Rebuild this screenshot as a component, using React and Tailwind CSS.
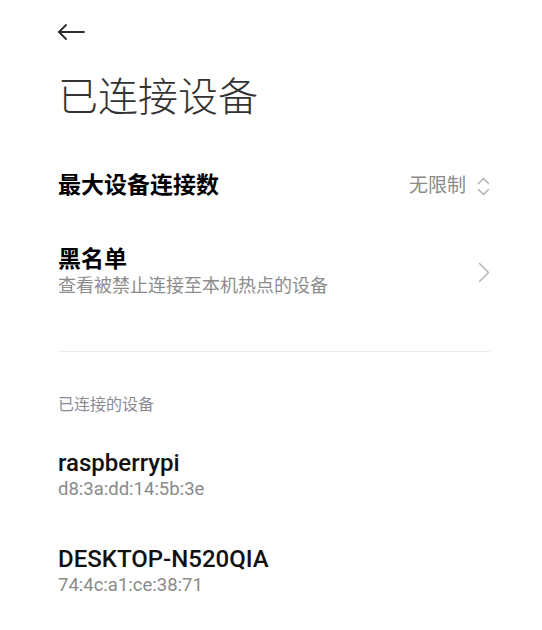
import React from 'react';

const font = { fontFamily: '"Roboto", "Noto Sans CJK SC", sans-serif' };

const devices = [
  { name: 'raspberrypi', mac: 'd8:3a:dd:14:5b:3e' },
  { name: 'DESKTOP-N520QIA', mac: '74:4c:a1:ce:38:71' },
];

const BackArrow = () => (
  <svg width="28" height="18" viewBox="0 0 28 18" fill="none" stroke="#2b2b2b" strokeWidth="1.8" strokeLinecap="round" strokeLinejoin="round">
    <path d="M2 9h25" />
    <path d="M9 2L2 9l7 7" />
  </svg>
);

const UpDown = () => (
  <svg width="13" height="19" viewBox="0 0 13 19" fill="none" stroke="#ababab" strokeWidth="1.4" strokeLinecap="round" strokeLinejoin="round">
    <path d="M1.5 6.5L6.5 1.5l5 5" />
    <path d="M1.5 12.5l5 5 5-5" />
  </svg>
);

const ChevronRight = () => (
  <svg width="12" height="21" viewBox="0 0 12 21" fill="none" stroke="#b0b0b0" strokeWidth="1.4" strokeLinecap="round" strokeLinejoin="round">
    <path d="M1.5 1.5l9 9-9 9" />
  </svg>
);

export default function App() {
  return (
    <div className="w-[542px] h-[630px] bg-white overflow-hidden pl-[58px] pr-[52px]" style={font}>
      <div className="h-16 flex items-center -ml-[1px]">
        <BackArrow />
      </div>

      <h1 className="mt-[10px] text-[40px] leading-[48px] font-light text-[#333333]">已连接设备</h1>

      <div className="mt-[48px] flex items-center justify-between">
        <div className="text-[23px] leading-[32px] font-bold text-black">最大设备连接数</div>
        <div className="flex items-center gap-[11px]">
          <span className="text-[19px] leading-[32px] text-[#8a8a8a]">无限制</span>
          <UpDown />
        </div>
      </div>

      <div className="mt-[45px] flex items-center justify-between">
        <div>
          <div className="text-[23px] leading-[26px] font-bold text-black">黑名单</div>
          <div className="mt-[1px] text-[18px] leading-[24px] text-[#8c8c8c]">查看被禁止连接至本机热点的设备</div>
        </div>
        <ChevronRight />
      </div>

      <div className="mt-[53px] h-px bg-[#ececec]" />

      <div className="mt-[42px] text-[16px] leading-[22px] text-[#8b8b96]">已连接的设备</div>

      <div className="mt-[33px] flex flex-col gap-[45px]">
        {devices.map((d) => (
          <div key={d.mac}>
            <div className="text-[24px] leading-[28px] font-medium text-[#111111]">{d.name}</div>
            <div className="mt-[1px] text-[18.5px] leading-[22px] text-[#8a8a8a]">{d.mac}</div>
          </div>
        ))}
      </div>
    </div>
  );
}
